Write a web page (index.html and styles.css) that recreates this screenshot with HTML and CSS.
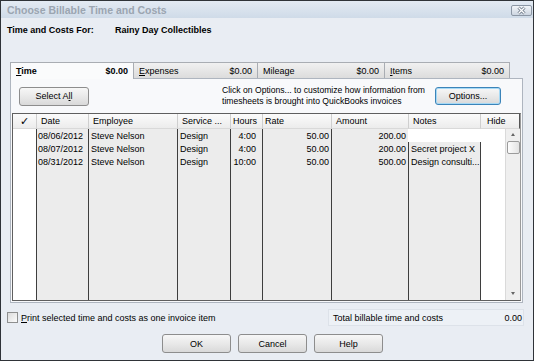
FILE: index.html
```html
<!DOCTYPE html>
<html>
<head>
  <meta charset="UTF-8" />
  <meta name="viewport" content="width=device-width, initial-scale=1" />
  <title>Choose Billable Time and Costs</title>
  <link rel="stylesheet" href="styles.css">
</head>
<body>
  <div class="window">
    <div class="titlebar">
      <span class="title">Choose Billable Time and Costs</span>
      <button class="close">
        <svg width="19" height="9" viewBox="0 0 19 9">
          <path d="M6.5 1.5 L12.5 7.5 M12.5 1.5 L6.5 7.5" stroke="#6f7b8a" stroke-width="3" />
          <path d="M6.5 1.5 L12.5 7.5 M12.5 1.5 L6.5 7.5" stroke="#fff" stroke-width="1.3" />
        </svg>
      </button>
    </div>

    <div class="for-line">
      <span class="for-label">Time and Costs For:</span>
      <span>Rainy Day Collectibles</span>
    </div>

    <div class="tabs">
      <div class="tab active"><span><u>T</u>ime</span><span>$0.00</span></div>
      <div class="tab expenses"><span><u>E</u>xpenses</span><span>$0.00</span></div>
      <div class="tab mileage"><span>Mileage</span><span>$0.00</span></div>
      <div class="tab items"><span><u>I</u>tems</span><span>$0.00</span></div>
    </div>

    <div class="panel">
      <div class="toolbar">
        <button class="btn select-all">Select A<u>l</u>l</button>
        <p class="hint">Click on Options... to customize how information from<br>timesheets is brought into QuickBooks invoices</p>
        <button class="btn options">Options...</button>
      </div>

      <table class="grid">
        <colgroup>
          <col style="width: 23px">
          <col style="width: 52px">
          <col style="width: 89px">
          <col style="width: 53px">
          <col style="width: 32px">
          <col style="width: 69px">
          <col style="width: 77px">
          <col style="width: 72px">
          <col style="width: 25px">
          <col style="width: 15px">
        </colgroup>
        <thead>
          <tr>
            <th class="chk">✓</th>
            <th>Date</th>
            <th>Employee</th>
            <th>Service ...</th>
            <th class="tight">Hours</th>
            <th class="tight">Rate</th>
            <th>Amount</th>
            <th>Notes</th>
            <th colspan="2" class="hide-head">Hide</th>
          </tr>
        </thead>
        <tbody>
          <tr>
            <td class="chk"></td>
            <td class="date">08/06/2012</td>
            <td>Steve Nelson</td>
            <td>Design</td>
            <td class="num hours">4:00</td>
            <td class="num">50.00</td>
            <td class="num">200.00</td>
            <td class="notes blank"></td>
            <td class="hide blank"></td>
            <td class="scroll" rowspan="4">
              <div class="scrollbar">
                <span class="arrow up"></span>
                <span class="thumb"></span>
                <span class="track"></span>
                <span class="arrow down"></span>
              </div>
            </td>
          </tr>
          <tr>
            <td class="chk"></td>
            <td class="date">08/07/2012</td>
            <td>Steve Nelson</td>
            <td>Design</td>
            <td class="num hours">4:00</td>
            <td class="num">50.00</td>
            <td class="num">200.00</td>
            <td class="notes">Secret project X</td>
            <td class="hide"></td>
          </tr>
          <tr>
            <td class="chk"></td>
            <td class="date">08/31/2012</td>
            <td>Steve Nelson</td>
            <td>Design</td>
            <td class="num hours">10:00</td>
            <td class="num">50.00</td>
            <td class="num">500.00</td>
            <td class="notes">Design consulti...</td>
            <td class="hide"></td>
          </tr>
          <tr class="fill">
            <td class="chk"></td>
            <td></td>
            <td></td>
            <td></td>
            <td></td>
            <td></td>
            <td></td>
            <td></td>
            <td class="hide"></td>
          </tr>
        </tbody>
      </table>
    </div>

    <div class="footer-row">
      <label class="print"><span class="checkbox"></span><span><u>P</u>rint selected time and costs as one invoice item</span></label>
      <div class="total"><span>Total billable time and costs</span><span>0.00</span></div>
    </div>

    <div class="actions">
      <button class="btn">OK</button>
      <button class="btn">Cancel</button>
      <button class="btn">Help</button>
    </div>
  </div>
</body>
</html>
```

FILE: styles.css
```css
* {
  box-sizing: border-box;
}

body {
  margin: 0;
  background: #fff;
  font: 9px "Liberation Sans", Arial, sans-serif;
  color: #000;
}

u { text-decoration: underline; }

.window {
  width: 534px;
  height: 361px;
  border: 1px solid #2f3338;
  background: #e9edf3;
  display: flex;
  flex-direction: column;
}

.titlebar {
  height: 17px;
  display: flex;
  align-items: center;
  background: linear-gradient(#e3eaf3, #cfdbe8);
}

.title {
  padding-left: 6px;
  font-size: 10.5px;
  font-weight: bold;
  color: #9ba5b1;
}

.close {
  margin-left: auto;
  margin-right: 1px;
  margin-top: 2px;
  width: 21px;
  height: 11px;
  padding: 0;
  border: 1px solid #8c97a5;
  border-radius: 2px;
  background: linear-gradient(#f2f5f9, #cdd6e1);
  display: flex;
  align-items: center;
  justify-content: center;
}

.for-line {
  margin-top: 6px;
  padding-left: 6px;
  height: 12px;
  display: flex;
  align-items: center;
  font-weight: bold;
}

.for-label { width: 108px; }

.tabs {
  margin-top: 26px;
  margin-left: 9px;
  height: 16px;
  display: flex;
  position: relative;
  z-index: 1;
}

.tab {
  width: 124px;
  height: 16px;
  padding: 0 5px 0 5px;
  display: flex;
  align-items: center;
  justify-content: space-between;
  border: 1px solid #a9adb3;
  border-bottom: none;
  background: linear-gradient(#f1f1f1, #dcdcdc);
  margin-right: -1px;
}

.tab.active {
  background: #fafbfc;
  height: 17px;
  font-weight: bold;
}

.tab.expenses { width: 125px; }
.tab.mileage { width: 128px; }
.tab.items { width: 126px; }

.panel {
  margin-left: 9px;
  width: 513px;
  height: 225px;
  border: 1px solid #aeb5bf;
  background: #f8f9fb;
  padding: 0 1px;
}

.toolbar {
  height: 34px;
  display: flex;
  align-items: center;
}

.btn {
  height: 19px;
  padding: 0;
  font: inherit;
  color: #000;
  border: 1px solid #8d8d8d;
  border-radius: 3px;
  background: linear-gradient(#f7f7f7, #e6e6e6 60%, #d9d9d9);
}

.select-all {
  margin-left: 7px;
  width: 70px;
}

.hint {
  margin: 0 0 0 133px;
  flex: 1;
  font-size: 8.6px;
  line-height: 11px;
}

.options {
  margin-right: 20px;
  width: 66px;
  height: 18px;
  border-color: #3b84b9;
  box-shadow: inset 0 0 0 1px #a6d9f5;
}

.grid {
  width: 509px;
  height: 188px;
  table-layout: fixed;
  border-spacing: 0;
  border: 1px solid #5f5f5f;
  border-right-color: #9a9a9a;
  background: #ececec;
}

.grid th {
  height: 15px;
  padding: 0 0 0 4px;
  text-align: left;
  font-weight: normal;
  white-space: nowrap;
  background: linear-gradient(#fbfbfb, #ececec);
  border-left: 1px solid #cfcfcf;
  border-bottom: 1px solid #d9d9d9;
}

.grid th.chk {
  border-left: none;
  padding: 0;
  text-align: center;
  font: bold 11px "DejaVu Sans", sans-serif;
}

.grid th.tight { padding-left: 2px; }
.grid th.hide-head {
  padding-left: 6px;
  border-right: 1px solid #555;
}

.grid td {
  height: 13px;
  padding: 0 2px;
  white-space: nowrap;
  overflow: hidden;
  border-left: 1px solid #3e3e3e;
}

.grid td.chk {
  border-left: none;
  background: #fff;
}

.grid td.date { padding: 0 0 0 1px; }
.grid td.num { text-align: right; padding-right: 2px; }
.grid td.hours { padding-right: 6px; }
.grid td.notes { padding-left: 2px; }
.grid td.hide { background: #fff; }
.grid td.blank {
  background: #fff;
  border-left-color: #fff;
}

.grid tr.fill td { height: 132px; }

.grid td.scroll {
  padding: 0;
  vertical-align: top;
  border-left: 1px solid #dadada;
}

.scrollbar {
  height: 171px;
  display: flex;
  flex-direction: column;
  align-items: center;
  background: #efefef;
}

.arrow {
  width: 0;
  height: 0;
  border-left: 2.5px solid transparent;
  border-right: 2.5px solid transparent;
}

.arrow.up {
  margin-top: 4px;
  border-bottom: 3px solid #666;
}

.arrow.down {
  margin-bottom: 5px;
  border-top: 3px solid #666;
}

.thumb {
  margin-top: 5px;
  width: 13px;
  height: 13px;
  border: 1px solid #9b9b9b;
  border-radius: 2px;
  background: linear-gradient(90deg, #fdfdfd, #e3e3e3);
}

.track { flex: 1; }

.footer-row {
  margin-top: 6px;
  height: 17px;
  display: flex;
  align-items: center;
}

.print {
  margin-left: 6px;
  display: flex;
  align-items: center;
  gap: 3px;
}

.checkbox {
  width: 11px;
  height: 11px;
  border: 1px solid #8e8f8f;
  background: linear-gradient(135deg, #dcdcdc, #fbfbfb);
}

.total {
  margin-left: auto;
  margin-right: 9px;
  width: 196px;
  height: 17px;
  padding: 0 1px 0 4px;
  display: flex;
  align-items: center;
  justify-content: space-between;
  background: #edf1f6;
  border: 1px solid #dde2e9;
}

.actions {
  margin-top: 8px;
  padding-left: 161px;
  display: flex;
  gap: 7px;
}

.actions .btn {
  width: 69px;
}
```
